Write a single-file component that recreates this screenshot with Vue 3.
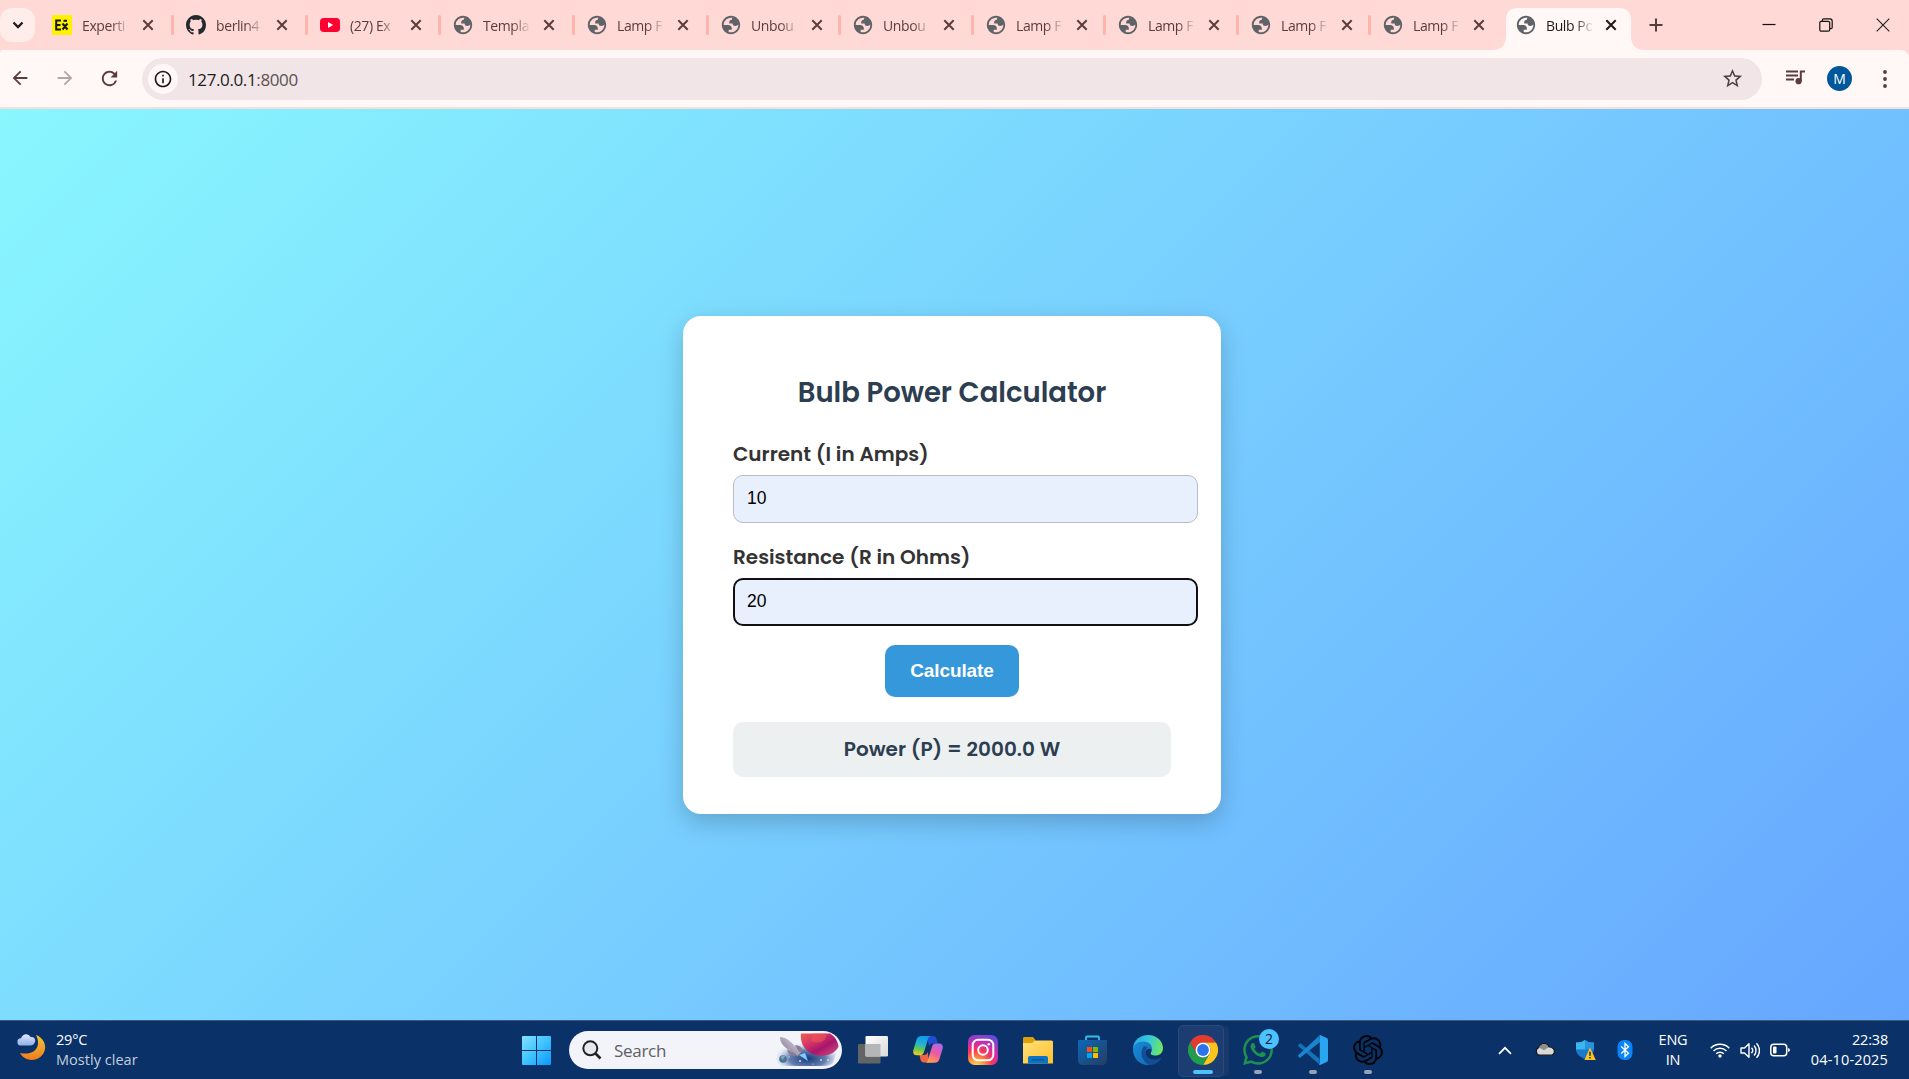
<script setup>
const globe = 'M12 2C6.48 2 2 6.48 2 12s4.48 10 10 10 10-4.48 10-10S17.52 2 12 2zM4 12h4.400c3.407.022 4.922 1.730 4.543 5.127H9.488v2.470a8.004 8.004 0 0 0 10.498-8.083C19.327 12.504 18.332 13 17 13c-2.137 0-3.206-.916-3.206-2.750h-3.748c-.274-2.728.683-4.092 2.870-4.092 0-.975.327-1.597.811-1.970A8 8 0 0 0 4 12z'

const tabs = [
  { title: 'Experti', icon: 'ex', width: 134 },
  { title: 'berlin4', icon: 'github', width: 134 },
  { title: '(27) Ex', icon: 'youtube', width: 133 },
  { title: 'Templa', icon: 'globe', width: 134 },
  { title: 'Lamp F', icon: 'globe', width: 134 },
  { title: 'Unbou', icon: 'globe', width: 132 },
  { title: 'Unbou', icon: 'globe', width: 133 },
  { title: 'Lamp F', icon: 'globe', width: 132 },
  { title: 'Lamp F', icon: 'globe', width: 133 },
  { title: 'Lamp F', icon: 'globe', width: 132 },
  { title: 'Lamp F', icon: 'globe', width: 132, last: true },
  { title: 'Bulb Po', icon: 'globe', width: 133, active: true },
]
</script>

<template>
  <div class="screen">
    <header class="tabstrip">
      <button class="tab-search">
        <svg width="12" height="8" viewBox="0 0 12 8"><path d="M1.500 1.500 6 6l4.500-4.500" fill="none" stroke="#1f1a19" stroke-width="2.300" /></svg>
      </button>
      <div class="tabs">
        <div
          v-for="(tab, i) in tabs"
          :key="i"
          class="tab"
          :class="{ active: tab.active, bare: tab.last || tab.active }"
          :style="{ width: tab.width + 'px' }"
        >
          <svg v-if="tab.active" class="tab-shape" width="153" height="42" viewBox="0 0 153 42"><path d="M0 42Q14 42 14 28V12Q14 0 26 0H127Q139 0 139 12V28Q139 42 153 42z" fill="#fff8f6" /></svg>
          <span class="favicon">
            <svg v-if="tab.icon === 'ex'" width="20" height="20" viewBox="0 0 20 20">
              <rect width="20" height="20" fill="#fff200" />
              <path d="M9 5.600H4.200v9H9M4.200 10H8.500M10.500 8.500l5 6M15.500 8.500l-5 6M11.500 5.800h3.500" fill="none" stroke="#16180b" stroke-width="2" />
            </svg>
            <svg v-else-if="tab.icon === 'github'" width="20" height="20" viewBox="0 0 16 16">
              <path fill="#24292f" d="M8 0C3.580 0 0 3.580 0 8c0 3.540 2.290 6.530 5.470 7.590.4.070.55-.17.55-.38 0-.19-.01-.82-.01-1.490-2.010.37-2.530-.49-2.690-.94-.09-.23-.48-.94-.82-1.130-.28-.15-.68-.52-.01-.53.63-.01 1.080.58 1.230.82.72 1.210 1.870.87 2.330.66.07-.52.28-.87.51-1.070-1.780-.2-3.640-.89-3.640-3.950 0-.87.31-1.590.82-2.150-.08-.2-.36-1.020.08-2.120 0 0 .67-.21 2.200.82.64-.18 1.320-.27 2-.27s1.360.09 2 .27c1.530-1.040 2.200-.82 2.200-.82.44 1.100.16 1.920.08 2.120.51.56.82 1.270.82 2.150 0 3.070-1.870 3.750-3.650 3.950.29.25.54.73.54 1.480 0 1.070-.01 1.930-.01 2.200 0 .21.15.46.55.38A8.010 8.010 0 0 0 16 8c0-4.420-3.580-8-8-8z" />
            </svg>
            <svg v-else-if="tab.icon === 'youtube'" width="20" height="20" viewBox="0 0 20 20">
              <rect y="3" width="20" height="14" rx="3.800" fill="#ff0033" /><path d="M8 7v6l5.200-3z" fill="#fff" />
            </svg>
            <svg v-else width="22" height="22" viewBox="0 0 24 24"><path :d="globe" fill="#5f6368" fill-rule="evenodd" /></svg>
          </span>
          <span class="tab-title">{{ tab.title }}</span>
          <svg class="close" width="12" height="12" viewBox="0 0 12 12"><path d="M1.300 1.300l9.400 9.400M10.700 1.300l-9.400 9.400" stroke="currentColor" stroke-width="2" /></svg>
        </div>
      </div>
      <svg class="new-tab" width="14" height="14" viewBox="0 0 14 14"><path d="M7 .5v13M.5 7h13" stroke="#5a3d3a" stroke-width="2" /></svg>
      <div class="window-controls">
        <svg width="14" height="14" viewBox="0 0 14 14"><path d="M.5 6.500h13" stroke="#111" stroke-width="1.200" /></svg>
        <svg width="14" height="14" viewBox="0 0 14 14" fill="none" stroke="#111" stroke-width="1.200"><rect x=".8" y="3.300" width="9.900" height="9.900" rx="1.500" /><path d="M3.300 3V2.200C3.300 1.400 4 .8 4.800.8h6c1.400 0 2.400 1 2.400 2.400v6c0 .8-.6 1.500-1.400 1.500H11" /></svg>
        <svg width="14" height="14" viewBox="0 0 14 14"><path d="M.7.7l12.600 12.600M13.300.7L.7 13.300" stroke="#222" stroke-width="1.100" /></svg>
      </div>
    </header>

    <nav class="toolbar">
      <div class="nav-icons">
        <svg width="22" height="22" viewBox="0 0 24 24"><path fill="#5a3d3a" d="M20 11H7.830l5.590-5.590L12 4l-8 8 8 8 1.410-1.410L7.830 13H20v-2z" /></svg>
        <svg width="22" height="22" viewBox="0 0 24 24"><path fill="#b5a5a3" d="M12 4l-1.410 1.410L16.170 11H4v2h12.170l-5.580 5.590L12 20l8-8z" /></svg>
        <svg width="23" height="23" viewBox="0 0 24 24"><path fill="#5a3d3a" d="M17.650 6.350A7.958 7.958 0 0 0 12 4c-4.420 0-7.990 3.580-7.990 8s3.570 8 7.990 8c3.730 0 6.840-2.550 7.730-6h-2.080A5.990 5.990 0 0 1 12 18c-3.310 0-6-2.690-6-6s2.690-6 6-6c1.660 0 3.140.69 4.220 1.780L13 11h7V4l-2.350 2.350z" /></svg>
      </div>
      <div class="omnibox">
        <span class="site-info">
          <svg width="20" height="20" viewBox="0 0 24 24"><path fill="#1f1a19" d="M11 7h2v2h-2zm0 4h2v6h-2zm1-9C6.480 2 2 6.480 2 12s4.480 10 10 10 10-4.480 10-10S17.520 2 12 2zm0 18c-4.410 0-8-3.590-8-8s3.590-8 8-8 8 3.590 8 8-3.590 8-8 8z" /></svg>
        </span>
        <span class="url">127.0.0.1<span>:8000</span></span>
        <svg class="star" width="23" height="23" viewBox="0 0 24 24"><path fill="#4b4143" d="M22 9.240l-7.190-.62L12 2 9.190 8.630 2 9.240l5.460 4.730L5.820 21 12 17.270 18.180 21l-1.630-7.030L22 9.240zM12 15.400l-3.760 2.270 1-4.280-3.320-2.880 4.380-.38L12 6.100l1.710 4.040 4.380.38-3.320 2.880 1 4.280L12 15.400z" /></svg>
      </div>
      <svg class="media" width="20" height="16" viewBox="0 0 20 16"><path d="M0 1.500h12M0 5.500h12M0 9.500h8M14 1.500h5M14.800 1v10" stroke="#5a3d3a" stroke-width="2" fill="none" /><circle cx="12.600" cy="11.200" r="3.100" fill="#5a3d3a" /></svg>
      <span class="avatar">M</span>
      <svg class="menu" width="4" height="18" viewBox="0 0 4 18" fill="#5a3d3a"><circle cx="2" cy="2" r="1.900" /><circle cx="2" cy="9" r="1.900" /><circle cx="2" cy="16" r="1.900" /></svg>
    </nav>

    <main class="page">
      <section class="card">
        <h2>Bulb Power Calculator</h2>
        <label class="l-current">Current (I in Amps)</label>
        <input type="text" value="10" />
        <label class="l-resistance">Resistance (R in Ohms)</label>
        <input class="focused" type="text" value="20" />
        <button class="calculate">Calculate</button>
        <div class="result"><span>Power (P) = 2000.0 W</span></div>
      </section>
    </main>

    <footer class="taskbar">
      <div class="weather">
        <svg width="29" height="29" viewBox="0 0 29 29">
          <defs>
            <linearGradient id="moon" x1="0" y1="0" x2="0" y2="1"><stop offset="0" stop-color="#f4c43d" /><stop offset="1" stop-color="#ee7d1c" /></linearGradient>
            <linearGradient id="cloud" x1="0" y1="0" x2="0" y2="1"><stop offset="0" stop-color="#dfe9fb" /><stop offset="1" stop-color="#8fb0e8" /></linearGradient>
          </defs>
          <path d="M19 2c6 2 10 8 9 14-1.500 11-18 16-25 4 9 2 17-1 18-9 .3-4-1-7-2-9z" fill="url(#moon)" />
          <path d="M4 12.500a3.600 3.600 0 0 1 0-7.200C5 1 11-.8 13.500 4c4-.8 5.800 3 4 6-.8 1.600-2 2.500-4 2.500z" fill="url(#cloud)" />
        </svg>
        <div class="weather-text"><span class="temp">29°C</span><span class="sky">Mostly clear</span></div>
      </div>

      <div class="apps">
        <svg class="start" width="29" height="29" viewBox="0 0 29 29">
          <defs><linearGradient id="win" x1="0" y1="0" x2="29" y2="29" gradientUnits="userSpaceOnUse"><stop offset="0" stop-color="#83e1ff" /><stop offset=".5" stop-color="#3fc3fd" /><stop offset="1" stop-color="#0a98fb" /></linearGradient></defs>
          <path fill="url(#win)" d="M1 0h13v14H0V1a1 1 0 0 1 1-1zM15 0h13a1 1 0 0 1 1 1v13H15zM0 15h14v14H1a1 1 0 0 1-1-1zM15 15h14v13a1 1 0 0 1-1 1H15z" />
        </svg>
        <div class="search">
          <svg width="20" height="20" viewBox="0 0 20 20"><circle cx="8.300" cy="8.300" r="7" fill="#e7e9ed" stroke="#222" stroke-width="2" /><path d="M13.500 13.500l5 5" stroke="#222" stroke-width="2.600" /></svg>
          <span>Search</span>
          <svg class="space-art" width="64" height="34" viewBox="0 0 64 34">
            <defs>
              <radialGradient id="sky" cx=".52" cy=".75" r=".55"><stop offset="0" stop-color="#123a7a" /><stop offset=".55" stop-color="#4c6ba4" stop-opacity=".85" /><stop offset="1" stop-color="#b9c9e6" stop-opacity="0" /></radialGradient>
              <linearGradient id="planet" x1="0" y1="0" x2="1" y2="1"><stop offset="0" stop-color="#f0604f" /><stop offset=".3" stop-color="#d93a66" /><stop offset=".6" stop-color="#a8156c" /><stop offset="1" stop-color="#d0587f" /></linearGradient>
              <linearGradient id="rocket" x1="0" y1="1" x2="1" y2="0"><stop offset="0" stop-color="#776b86" /><stop offset="1" stop-color="#e6deea" /></linearGradient>
            </defs>
            <path d="M2 18L24 4h30l8 14-4 12q-3 3-8 3H8q-6 0-7-7z" fill="url(#sky)" />
            <path d="M26 .500h29c5 3 8 8 8.500 13-4 9-18 12-27 7C28 16 25 8 26 .500z" fill="url(#planet)" />
            <path d="M38 .500h14l-2 6q-7 6-14 1z" fill="#ee5850" opacity=".6" />
            <path d="M24 22l9 6-3-8z" fill="#7ecbff" />
            <path d="M5 4c4 0 8 2 12 6l9 9-3.500 4-10-7C8 13 5 9 5 4z" fill="url(#rocket)" />
            <path d="M20 12q6 0 8 6l-4 1zM12 16.500q1 6 8 6.500l1-2z" fill="#8a7c92" />
            <circle cx="8" cy="26" r="3.800" fill="#4a7398" /><path d="M5.500 24a4 4 0 0 1 5-1l-3 4z" fill="#83a6b4" />
            <g fill="#ecdcb5"><circle cx="14" cy="24" r=".7" /><circle cx="25" cy="28" r="1" /><circle cx="46" cy="27" r=".9" /><circle cx="53" cy="27" r=".9" /><circle cx="38" cy="31" r=".6" /></g>
          </svg>
        </div>

        <div class="app"><svg width="30" height="30" viewBox="0 0 30 30">
          <defs><linearGradient id="tv" x1="0" y1="0" x2="1" y2="1"><stop offset="0" stop-color="#fff" /><stop offset="1" stop-color="#dadada" /></linearGradient></defs>
          <rect y="9" width="22.500" height="19.500" rx="1.200" fill="#636466" /><rect x="7.500" y="1" width="22.500" height="20.500" rx="1.200" fill="url(#tv)" /><path d="M7.500 9h15v12.500h-14a1 1 0 0 1-1-1z" fill="#b5b6b8" />
        </svg></div>

        <div class="app"><svg width="30" height="30" viewBox="0 0 30 30">
          <defs>
            <linearGradient id="cpa" x1=".5" y1="0" x2=".3" y2="1"><stop offset="0" stop-color="#1398ef" /><stop offset=".4" stop-color="#20b4d0" /><stop offset=".7" stop-color="#6bc653" /><stop offset="1" stop-color="#f3cf1d" /></linearGradient>
            <linearGradient id="cpb" x1=".8" y1="0" x2=".3" y2="1"><stop offset="0" stop-color="#a76bf2" /><stop offset=".5" stop-color="#ec5aa0" /><stop offset="1" stop-color="#ffa24b" /></linearGradient>
          </defs>
          <path d="M14 1h6c2 0 3 1 3.500 3l1.200 4.500H20c-2.500 0-3.500 1-4 3z" fill="#1e4fd0" />
          <path d="M16 27.500h-5c-2 0-3-1-3.500-3L6.500 20H11c2.200 0 3-1 3.800-3z" fill="#ef6447" />
          <path d="M8.500 1H18c-1.600 0-2.300 1-2.800 2.600L11 17c-.7 2.200-2 3.300-4 3.300H4C1 20.300-.5 18 .4 15L3.600 4.600C4.300 2.200 6 1 8.500 1z" fill="url(#cpa)" />
          <path d="M21.500 27.800H12c1.600 0 2.300-1 2.800-2.600L19 11.700c.7-2.200 2-3.300 4-3.300h3c3 0 4.500 2.300 3.600 5.300l-3.200 10.500c-.7 2.400-2.400 3.600-4.900 3.600z" fill="url(#cpb)" />
        </svg></div>

        <div class="app"><svg width="30" height="30" viewBox="0 0 30 30">
          <defs><radialGradient id="ig" cx=".27" cy="1.050" r="1.150"><stop offset="0" stop-color="#ffda66" /><stop offset=".22" stop-color="#ff9d3b" /><stop offset=".46" stop-color="#f73b55" /><stop offset=".68" stop-color="#d22bab" /><stop offset="1" stop-color="#5c4ee0" /></radialGradient></defs>
          <rect width="30" height="30" rx="6.500" fill="url(#ig)" /><g fill="none" stroke="#fff" stroke-width="2"><rect x="4.700" y="4.700" width="20.600" height="20.600" rx="5.500" /><circle cx="15" cy="15" r="4.800" /></g><circle cx="20.800" cy="9.200" r="1.300" fill="#fff" />
        </svg></div>

        <div class="app"><svg width="30" height="30" viewBox="0 0 30 30">
          <defs><linearGradient id="fold" x1="0" y1="0" x2="1" y2="1"><stop offset="0" stop-color="#ffe17c" /><stop offset="1" stop-color="#ffc029" /></linearGradient></defs>
          <path d="M1.500 2H10l2.500 3v6H0V3.500C0 2.600.6 2 1.500 2z" fill="#dca00b" /><path d="M0 8h8.500q1 0 2-1.300Q11.500 5.500 13 5.500h15.500q1.500 0 1.500 1.500v21.500H0z" fill="url(#fold)" />
          <path d="M5 28.500V23q0-2 2-2h16q2 0 2 2v5.500z" fill="#0b75c5" /><path d="M9 24.800h12" stroke="#07509a" stroke-width="1.200" />
        </svg></div>

        <div class="app"><svg width="30" height="30" viewBox="0 0 30 30">
          <defs><linearGradient id="store" x1="0" y1="0" x2="1" y2="1"><stop offset="0" stop-color="#0a69b8" /><stop offset="1" stop-color="#273b61" /></linearGradient></defs>
          <path d="M8 7V2.500Q8 1.500 9 1.500h11q1 0 1 1V7" fill="none" stroke="#35bdec" stroke-width="1.800" /><path d="M0 6q0-1 1-1h27q1 0 1 1v19q0 5-5 5H5q-5 0-5-5z" fill="url(#store)" />
          <path d="M9 12h5v5H9z" fill="#f25022" /><path d="M15 12h5v5h-5z" fill="#7fba00" /><path d="M9 18h5v5H9z" fill="#00a4ef" /><path d="M15 18h5v5h-5z" fill="#ffb900" />
        </svg></div>

        <div class="app"><svg width="30" height="30" viewBox="0 0 30 30">
          <defs>
            <linearGradient id="e1" x1="0" y1=".3" x2="1" y2=".5"><stop offset="0" stop-color="#25a9ea" /><stop offset=".5" stop-color="#35c9d8" /><stop offset="1" stop-color="#6fe860" /></linearGradient>
            <linearGradient id="e2" x1="0" y1="0" x2="1" y2="1"><stop offset="0" stop-color="#168ad8" /><stop offset="1" stop-color="#1468b6" /></linearGradient>
          </defs>
          <path d="M0 14C0 5.500 7 0 15 0c9 0 15 6.500 15 13 0 5-3.500 7.500-7.500 7.500-3.500 0-5.500-1.300-4.500-3 2.500-4-1-8.500-7-8.500C6 9 1.500 11 0 14z" fill="url(#e1)" />
          <path d="M0 15c0-5.500 5-8.500 10.500-8.500 5.500 0 9 3.500 8.500 8.500-2-2.500-6-1.500-6.500 2.500-.7 5.500 4 10.500 10.500 9.500-2.300 2-5 3-8 3C6.500 30 0 23 0 15z" fill="url(#e2)" />
          <path d="M11 11c-5 6-2 16 5.500 19 5 0 8.700-2.300 11.300-6 .5-.8-.3-1.300-1-.8C20 26.500 12.500 23 12.500 17c0-2 1-3.500 2.500-4.500z" fill="#124e94" />
        </svg></div>

        <div class="app running chrome">
          <svg width="30" height="30" viewBox="0 0 30 30">
            <path d="M2 7.500A15 15 0 0 1 28 7.500H15A7.500 7.500 0 0 0 8.500 18.700z" fill="#e33b2e" /><path d="M28 7.500A15 15 0 0 1 15 30l6.500-11.300A7.500 7.500 0 0 0 15 7.500z" fill="#fdc51c" /><path d="M15 30A15 15 0 0 1 2 7.500l6.500 11.300a7.500 7.500 0 0 0 13 0z" fill="#229c4c" /><circle cx="15" cy="15" r="7.500" fill="#fff" /><circle cx="15" cy="15" r="5.900" fill="#2d73ea" />
          </svg>
        </div>

        <div class="app running">
          <svg width="30" height="30" viewBox="0 0 24 24" fill="#1d9150"><path d="M17.472 14.382c-.297-.149-1.758-.867-2.030-.967-.273-.099-.471-.148-.67.15-.197.297-.767.966-.94 1.164-.173.199-.347.223-.644.075-.297-.15-1.255-.463-2.390-1.475-.883-.788-1.480-1.761-1.653-2.059-.173-.297-.018-.458.13-.606.134-.133.298-.347.446-.52.149-.174.198-.298.298-.497.099-.198.05-.371-.025-.52-.075-.149-.669-1.612-.916-2.207-.242-.579-.487-.5-.669-.51-.173-.008-.371-.01-.57-.01-.198 0-.52.074-.792.372-.272.297-1.040 1.016-1.040 2.479 0 1.462 1.065 2.875 1.213 3.074.149.198 2.096 3.200 5.077 4.487.709.306 1.262.489 1.694.625.712.227 1.360.195 1.871.118.571-.085 1.758-.719 2.006-1.413.248-.694.248-1.289.173-1.413-.074-.124-.272-.198-.57-.347m-5.421 7.403h-.004a9.870 9.870 0 01-5.031-1.378l-.361-.214-3.741.982.998-3.648-.235-.374a9.860 9.860 0 01-1.510-5.260c.001-5.450 4.436-9.884 9.888-9.884 2.640 0 5.122 1.030 6.988 2.898a9.825 9.825 0 012.893 6.994c-.003 5.450-4.437 9.884-9.885 9.884m8.413-18.297A11.815 11.815 0 0012.050 0C5.495 0 .16 5.335.157 11.892c0 2.096.547 4.142 1.588 5.945L.057 24l6.305-1.654a11.882 11.882 0 005.683 1.448h.005c6.554 0 11.890-5.335 11.893-11.893a11.821 11.821 0 00-3.480-8.413Z" /></svg>
          <span class="badge">2</span>
        </div>

        <div class="app running"><svg width="30" height="30" viewBox="0 0 30 30">
          <path d="M2.500 8.200l18.800 15.300L22 30 .7 11.600q-1-1 0-2z" fill="#1372b8" /><path d="M2.500 22.500q-.8.600-1.600-.2L.4 21.500q-.7-.8.200-1.700L21.500.500 22 7z" fill="#1a85cf" /><path d="M21 .5Q21.500-.2 22.700.2l6 2.800q1.300.6 1.300 2v20q0 1.400-1.300 2l-6 2.800q-1 .4-1.800-.4.900.3.900-1.200V1.800Q21.800.6 21 .5z" fill="#2aa5f2" />
        </svg></div>

        <div class="app running"><svg width="30" height="30" viewBox="0 0 24 24"><path fill="#020408" d="M22.282 9.821a5.985 5.985 0 0 0-.516-4.911 6.046 6.046 0 0 0-6.510-2.900A6.065 6.065 0 0 0 4.981 4.182a5.985 5.985 0 0 0-3.998 2.900 6.046 6.046 0 0 0 .743 7.097 5.980 5.980 0 0 0 .511 4.911 6.051 6.051 0 0 0 6.515 2.900A5.985 5.985 0 0 0 13.260 24a6.056 6.056 0 0 0 5.772-4.206 5.989 5.989 0 0 0 3.998-2.900 6.056 6.056 0 0 0-.748-7.073zm-9.022 12.608a4.476 4.476 0 0 1-2.876-1.041l.142-.080 4.778-2.758a.795.795 0 0 0 .393-.681v-6.737l2.020 1.169a.071.071 0 0 1 .038.052v5.583a4.504 4.504 0 0 1-4.495 4.494zm-9.661-4.125a4.471 4.471 0 0 1-.535-3.014l.142.085 4.783 2.758a.771.771 0 0 0 .781 0l5.843-3.369v2.332a.080.080 0 0 1-.033.062L9.740 19.950a4.499 4.499 0 0 1-6.141-1.646zM2.341 7.896a4.485 4.485 0 0 1 2.366-1.973V11.600a.766.766 0 0 0 .388.677l5.814 3.354-2.020 1.169a.076.076 0 0 1-.071 0l-4.830-2.787A4.504 4.504 0 0 1 2.341 7.872zm16.596 3.856L13.104 8.364 15.119 7.200a.076.076 0 0 1 .071 0l4.830 2.791a4.494 4.494 0 0 1-.677 8.104v-5.677a.790.790 0 0 0-.407-.667zm2.011-3.023l-.142-.085-4.774-2.782a.776.776 0 0 0-.785 0L9.409 9.230V6.897a.066.066 0 0 1 .028-.062l4.830-2.787a4.499 4.499 0 0 1 6.680 4.660zM8.307 12.863l-2.020-1.164a.080.080 0 0 1-.038-.057V6.074a4.499 4.499 0 0 1 7.376-3.454l-.142.081L8.704 5.459a.795.795 0 0 0-.393.681zm1.098-2.365l2.602-1.500 2.607 1.500v2.999l-2.597 1.500-2.607-1.500Z" /></svg></div>
      </div>

      <div class="tray">
        <svg class="chev" width="14" height="9" viewBox="0 0 14 9"><path d="M1 7.800l6-6 6 6" fill="none" stroke="#fff" stroke-width="1.700" /></svg>
        <svg class="onedrive" width="20" height="14" viewBox="0 0 20 14"><path d="M4.500 13.200A4 4 0 0 1 4 5.500C5.500 1 12 0 14 5c4 0 5.500 2.500 5.400 4.500-.1 2.300-1.900 3.700-4 3.700z" fill="#d9d9d9" stroke="#17191c" stroke-width="1.200" /><path d="M4 5.600C5.500 1.400 11.500.6 13.600 5.200L9 8.300z" fill="#8e8e8e" /></svg>
        <svg class="defender" width="20" height="20" viewBox="0 0 20 20"><path d="M0 2.500Q5 3 9 0q4 3 9 2.500V9c0 5-4 8-9 10-5-2-9-5-9-10z" fill="#1878cc" /><path d="M0 2.500Q5 3 9 0v9.500H0z" fill="#39b8f0" /><path d="M9 0q4 3 9 2.500V9.500H9z" fill="#2594dc" /><path d="M14 7.500L19.800 20H8.500z" fill="#fdc41f" /><path d="M14 11.800v4M14 17v1.500" stroke="#2b2413" stroke-width="1.500" /></svg>
        <svg class="bluetooth" width="16" height="20" viewBox="0 0 16 20"><rect x=".5" width="15" height="20" rx="6.500" fill="#0a84f7" /><path d="M4.200 6.500l7.300 6.800L8 16.500v-13l3.500 3.200-7.300 6.800" fill="none" stroke="#fff" stroke-width="1.300" /></svg>
        <div class="lang"><span>ENG</span><span>IN</span></div>
        <svg class="wifi" width="20" height="16" viewBox="0 0 20 16" fill="none" stroke="#fff" stroke-width="1.500"><path d="M.7 6.200a13 13 0 0 1 18.600 0M3.500 9a9.200 9.200 0 0 1 13 0M6.200 11.700a5.400 5.400 0 0 1 7.600 0" /><circle cx="10" cy="14" r="1.700" fill="#fff" stroke="none" /></svg>
        <svg class="volume" width="20" height="17" viewBox="0 0 20 17" fill="none" stroke="#fff" stroke-width="1.400"><path d="M1 6h3.500L9 1.800v13.400L4.500 11H1z" stroke-linejoin="round" /><path d="M11.500 5.800a4 4 0 0 1 0 5.400M14 3.400a7.500 7.500 0 0 1 0 10.200M16.500 1.200a10.500 10.500 0 0 1 0 14.600" /></svg>
        <svg class="battery" width="20" height="14" viewBox="0 0 20 14"><rect x=".8" y="1.300" width="15.900" height="11.400" rx="3" fill="none" stroke="#fff" stroke-width="1.500" /><rect x="3" y="3.500" width="3.500" height="7" rx="1" fill="#fff" /><path d="M18 5q2 .3 2 2t-2 2z" fill="#fff" /></svg>
        <div class="clock"><span>22:38</span><span class="date">04-10-2025</span></div>
      </div>
    </footer>
  </div>
</template>

<style>
body { margin: 0; overflow: hidden; }
</style>

<style scoped>
* { box-sizing: border-box; }
svg { display: block; flex: none; }
.screen { width: 1909px; height: 1079px; display: flex; flex-direction: column; font-family: "Segoe UI", "Open Sans", "Noto Sans", sans-serif; background: #ffd9d6; overflow: hidden; }

.tabstrip { height: 50px; flex: none; background: #ffd9d6; display: flex; align-items: center; }
.tab-search { width: 35px; height: 34px; border: 0; padding: 0; border-radius: 12px; background: #ffedea; display: flex; align-items: center; justify-content: center; }
.tab-search svg { margin-left: 1px; }
.tabs { display: flex; height: 50px; margin-left: 4px; }
.tab { height: 50px; display: flex; align-items: center; padding-left: 13px; position: relative; color: #5a3d3a; flex: none; }
.tab:not(.bare)::after { content: ""; position: absolute; right: -1px; top: 15px; width: 3px; height: 20px; border-radius: 2px; background: #ffb4ab; }
.favicon { width: 20px; height: 20px; display: flex; align-items: center; justify-content: center; flex: none; position: relative; }
.tab-title { width: 46px; margin-left: 10px; font-size: 14px; letter-spacing: -0.4px; line-height: 20px; padding-top: 1px; white-space: nowrap; flex: none; position: relative; -webkit-mask-image: linear-gradient(90deg, #000 64%, transparent 104%); mask-image: linear-gradient(90deg, #000 64%, transparent 104%); }
.close { margin-left: 14px; position: relative; }
.tab.active { color: #1f1a19; margin-left: 1px; }
.tab.active .close { margin-left: 13px; }
.tab-shape { position: absolute; left: -11px; top: 8px; }
.new-tab { margin-left: 13px; }
.window-controls { display: flex; gap: 43px; margin-left: auto; margin-right: 19px; }

.toolbar { height: 59px; flex: none; background: #fff8f6; border-bottom: 2px solid #f6dedb; display: flex; align-items: center; border-radius: 3px 8px 0 0; }
.nav-icons { display: flex; gap: 23px; padding-left: 9px; width: 142px; }
.nav-icons svg:last-child { margin-left: -1px; }
.omnibox { width: 1620px; height: 42px; border-radius: 21px; background: #f1e5e7; display: flex; align-items: center; padding: 0 18px 0 6px; }
.site-info { width: 30px; height: 30px; border-radius: 50%; background: #fff8f6; display: flex; align-items: center; justify-content: center; }
.url { margin-left: 10px; margin-top: 1px; font-size: 17px; letter-spacing: -0.38px; color: #221b1c; }
.url span { color: #5b5053; }
.star { margin-left: auto; }
.media { margin-left: 24px; margin-top: -2px; }
.avatar { margin-left: 21px; width: 25px; height: 25px; border-radius: 50%; background: #00579b; color: #fff; font-size: 14px; line-height: 25px; text-align: center; }
.menu { margin-left: 31px; }

.page { height: 911px; flex: none; background: linear-gradient(135deg, #89f7fe, #66a6ff); display: flex; flex-direction: column; align-items: center; padding-top: 207px; padding-right: 5px; }
.card { width: 538px; height: 498px; padding: 59px 50px 0; background: #fff; border-radius: 18px; box-shadow: 0 8px 25px rgba(0, 0, 0, 0.2); display: flex; flex-direction: column; font-family: Poppins, Inter, sans-serif; }
h2 { margin: 0; height: 36px; line-height: 36px; text-align: center; font-size: 27.500px; font-weight: 600; color: #2c3e50; white-space: nowrap; }
label { height: 30px; line-height: 30px; font-size: 20px; font-weight: 600; color: #333; white-space: nowrap; }
.l-current { margin-top: 28px; }
.l-resistance { margin-top: 19px; }
input { width: 465px; height: 48px; margin-top: 6px; padding: 0 14px 2px 13px; border: 1px solid #b9bcc2; border-radius: 10px; background: #e8f0fe; font-family: Arial, "Liberation Sans", sans-serif; font-size: 17.500px; color: #000; outline: none; flex: none; }
input.focused { border: 2px solid #101014; padding-left: 12px; }
.calculate { align-self: center; margin-top: 19px; width: 134px; height: 52px; flex: none; border: 0; border-radius: 10px; background: #3498db; color: #fff; font-family: Arial, "Liberation Sans", sans-serif; font-size: 19px; letter-spacing: -0.1px; font-weight: 700; padding: 0 0 1px; }
.result { margin-top: 25px; height: 55px; padding-bottom: 2px; border-radius: 10px; background: #ecf0f1; color: #2c3e50; font-size: 20px; font-weight: 600; display: flex; align-items: center; justify-content: center; white-space: nowrap; }

.taskbar { height: 59px; flex: none; background: #0a3268; border-top: 1px solid #3c5a78; display: flex; color: #fff; font-size: 14.500px; }
.weather { width: 522px; display: flex; padding: 12px 0 0 17px; }
.weather-text { margin-left: 10px; display: flex; flex-direction: column; line-height: 20px; margin-top: -3px; letter-spacing: -0.2px; }
.sky { color: #c3cedc; letter-spacing: 0.03px; }
.apps { display: flex; align-items: center; width: 976px; }
.start { margin-right: 18px; }
.search { width: 273px; height: 38px; margin-right: 7px; border-radius: 19px; background: #f2f4f9; display: flex; align-items: center; padding: 0 3px 0 13px; color: #5c5f64; font-size: 17px; }
.search span { margin-left: 12px; letter-spacing: -0.3px; }
.space-art { margin-left: auto; }
.app { width: 55px; height: 58px; display: flex; align-items: center; justify-content: center; position: relative; flex: none; }
.app svg { position: relative; margin-left: -7px; }
.running::after { content: ""; position: absolute; left: 19.500px; bottom: 5px; width: 8px; height: 4px; border-radius: 2px; background: #94a3ba; }
.chrome::before { content: ""; position: absolute; left: -1px; top: 4px; width: 44px; height: 50px; border-radius: 5px; background: #1b3d72; border: 1px solid #2a4a7c; box-shadow: 6px 0 0 -1px #173869; }
.chrome::after { left: 14px; width: 20px; background: #4cc2ff; }
.badge { position: absolute; left: 25px; top: 8px; width: 20px; height: 20px; border-radius: 50%; background: #4cc2ff; color: #0b2036; font-size: 14px; line-height: 20px; text-align: center; }
.tray { flex: 1; display: flex; align-items: center; }
.onedrive { margin-left: 23px; margin-top: -3px; }
.defender { margin-left: 21px; }
.bluetooth { margin-left: 21px; }
.lang, .clock { display: flex; flex-direction: column; line-height: 20px; letter-spacing: -0.2px; }
.lang { width: 60px; margin-left: 10px; align-items: center; }
.wifi { margin-left: 7px; }
.volume { margin-left: 10px; }
.battery { margin-left: 10px; }
.clock { margin-left: auto; margin-right: 21px; align-items: flex-end; }
.date { letter-spacing: 0.15px; }
</style>
